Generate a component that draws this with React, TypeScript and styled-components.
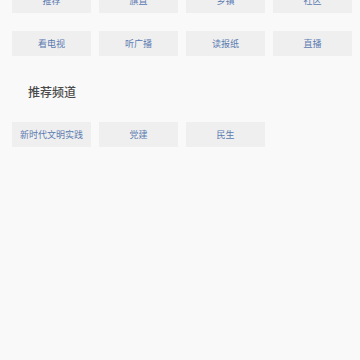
import styled, { createGlobalStyle } from "styled-components";

const GlobalStyle = createGlobalStyle`
    html, body {
        margin: 0;
        padding: 0;
        background: #f9f9f9;
        font-family: "Noto Sans CJK SC", "Noto Sans", sans-serif;
    }
`;

// 页面顶部已滚动，第一行频道只露出下半部分
const myChannels = ["推荐", "旗直", "乡镇", "社区", "看电视", "听广播", "读报纸", "直播"];
const recommended = ["新时代文明实践", "党建", "民生"];

function App() {
    return (
        <>
            <GlobalStyle />
            <Page>
                <ChannelGrid $offset={-12}>
                    {myChannels.map((name) => (
                        <ChannelButton key={name}>{name}</ChannelButton>
                    ))}
                </ChannelGrid>

                <SectionTitle>推荐频道</SectionTitle>

                <ChannelGrid $offset={0}>
                    {recommended.map((name) => (
                        <ChannelButton key={name}>{name}</ChannelButton>
                    ))}
                </ChannelGrid>
            </Page>
        </>
    );
}

const Page = styled.div`
    width: 360px;
    height: 360px;
    overflow: hidden;
    background: #f9f9f9;
`;

const ChannelGrid = styled.div<{ $offset: number }>`
    display: grid;
    grid-template-columns: repeat(4, 79px);
    column-gap: 8px;
    row-gap: 18px;
    padding: 0 8px 0 12px;
    margin-top: ${({ $offset }) => $offset}px;
`;

const ChannelButton = styled.div`
    height: 25px;
    display: flex;
    align-items: center;
    justify-content: center;
    background: #efefef;
    color: #5b7bb1;
    font-size: 9px;
    line-height: 1;
    white-space: nowrap;
`;

const SectionTitle = styled.div`
    padding: 29px 0 23px 28px;
    font-size: 12px;
    line-height: 14px;
    color: #4a4a4a;
    font-weight: 500;
`;

export default App;
